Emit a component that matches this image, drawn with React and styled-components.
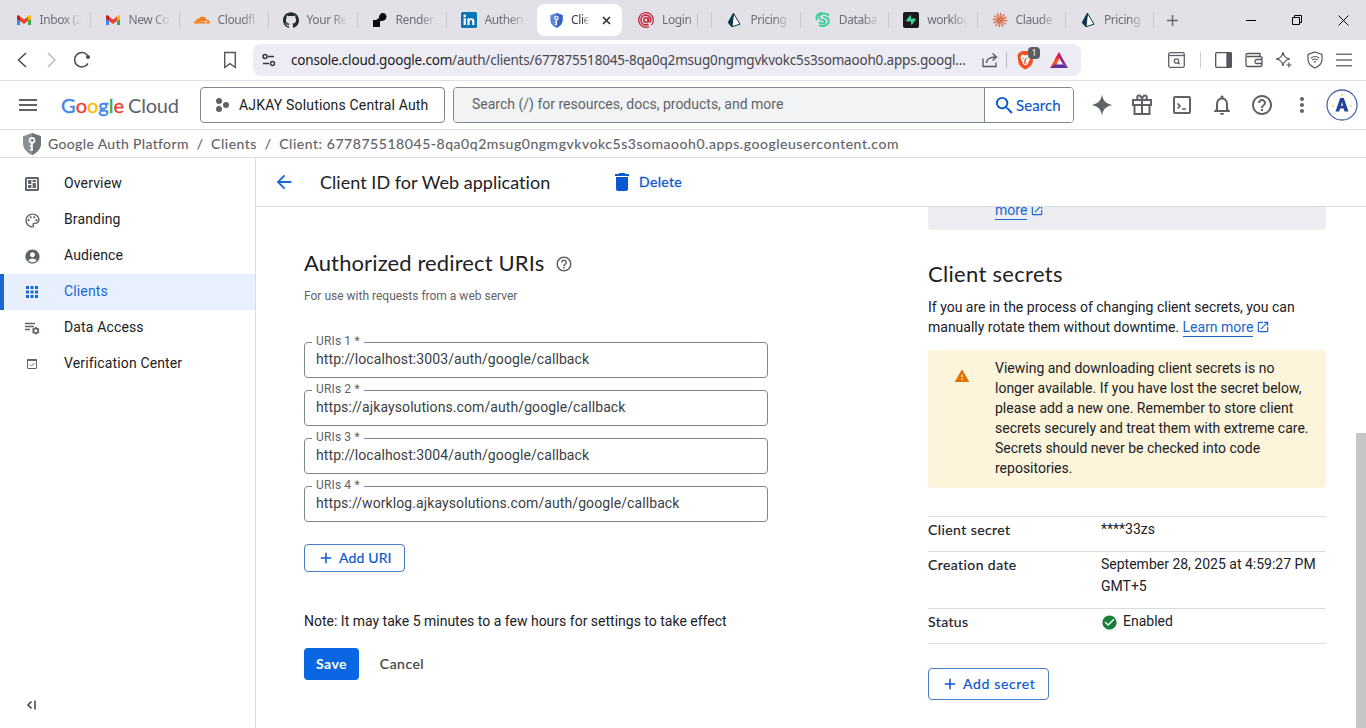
import React from 'react';
import styled, { createGlobalStyle } from 'styled-components';
import {
  MdOutlinePalette, MdAccountCircle, MdApps, MdDelete, MdArrowBack, MdHelpOutline,
  MdOpenInNew, MdWarning, MdCheckCircle, MdAdd, MdMoreVert, MdNotificationsNone,
  MdSearch, MdMenu,
} from 'react-icons/md';
import { SiCloudflare, SiGithub, SiSupabase } from 'react-icons/si';

const product = '"Lato", "Open Sans", sans-serif';
const chrome = '"Noto Sans", "Open Sans", sans-serif';

const GlobalStyle = createGlobalStyle`
  * { box-sizing: border-box; }
  body { margin: 0; background: #fff; color: #202124; font: 14px/20px Roboto, "Liberation Sans", sans-serif; overflow: hidden; }
  svg { display: block; flex: none; }
  button { font: inherit; margin: 0; cursor: pointer; }
`;

const Window = styled.div`
  display: flex;
  flex-direction: column;
  width: 1366px;
  height: 728px;
  overflow: hidden;
`;

/* ---------- browser tabs ---------- */
const TabStrip = styled.div`
  display: flex;
  flex: none;
  height: 40px;
  padding-left: 1.5px;
  background: #e2e1e8;
  font-family: ${chrome};
`;
const Tab = styled.div`
  display: flex;
  align-items: center;
  width: ${p => p.$w}px;
  height: 40px;
  padding-left: 14px;
`;
const TabTitle = styled.span`
  width: ${p => p.$w || 41}px;
  margin-left: 8px;
  overflow: hidden;
  white-space: nowrap;
  font-size: 12px;
  letter-spacing: -0.4px;
  line-height: 18px;
  color: ${p => (p.$dark ? '#3b3b42' : '#6e6e77')};
  mask-image: linear-gradient(to right, #000 60%, transparent 100%);
`;
const TabDivider = styled.span`
  width: 1px;
  height: 16px;
  margin-left: auto;
  background: ${p => (p.$hidden ? 'transparent' : '#c9c8d0')};
`;
const ActiveTab = styled.div`
  display: flex;
  align-items: center;
  width: 85px;
  height: 32px;
  margin: 4px 2px 0 1.5px;
  padding-left: 13px;
  border-radius: 8px;
  background: #fff;
`;
const NewTab = styled.div`
  display: flex;
  align-items: center;
  justify-content: center;
  width: 36px;
  height: 40px;
`;
const WindowButtons = styled.div`
  display: flex;
  margin-left: auto;
`;
const WindowButton = styled.div`
  display: flex;
  align-items: center;
  justify-content: center;
  width: 46px;
  height: 40px;
`;

/* ---------- address bar ---------- */
const Toolbar = styled.div`
  display: flex;
  flex: none;
  align-items: center;
  height: 41px;
  padding: 0 14px 0 15px;
  border-bottom: 1px solid #dfdee5;
`;
const NavButtons = styled.div`
  display: flex;
  align-items: center;
  gap: 15px;
  width: 208px;
`;
const AddressField = styled.div`
  display: flex;
  flex: none;
  align-items: center;
  width: 828px;
  height: 32px;
  margin-left: 16px;
  padding: 0 11px 0 8px;
  border-radius: 8px;
  background: #edecf4;
`;
const Address = styled.span`
  flex: none;
  width: 676px;
  margin: 0 15px 0 14px;
  white-space: nowrap;
  font: 13.5px/20px ${chrome};
  letter-spacing: -0.19px;
  color: #46464f;
  b { font-weight: 400; color: #1b1b1f; }
`;
const FieldDivider = styled.span`
  width: 1px;
  height: 16px;
  margin: 0 10px 0 8px;
  background: #b9b8c2;
`;
const Shields = styled.div`
  position: relative;
  width: 23px;
  height: 20px;
  margin-right: 10px;
`;
const ShieldBadge = styled.span`
  position: absolute;
  top: -3px;
  right: 0;
  width: 12px;
  height: 12px;
  border-radius: 4px;
  background: #5b5e66;
  color: #fff;
  font: 8px/12px ${chrome};
  text-align: center;
`;
const Extensions = styled.div`
  display: flex;
  align-items: center;
  margin-left: auto;
`;
const ExtDivider = styled.span`
  width: 1px;
  height: 16px;
  margin: 0 14px 0 15px;
  background: #d0cfd6;
`;
const ExtGroup = styled.div`
  display: flex;
  align-items: center;
  gap: 12.5px;
`;

/* ---------- console header ---------- */
const ConsoleBar = styled.header`
  display: flex;
  flex: none;
  align-items: center;
  height: 49px;
  padding: 0 8px 0 16px;
  border-bottom: 1px solid #dadce0;
  color: #5f6368;
`;
const Logo = styled.div`
  display: flex;
  flex: none;
  width: 117px;
  margin: -1px 22px 0 21px;
  font: 20px/28px ${product};
`;
const LogoLetter = styled.span`
  color: ${p => p.$c};
  -webkit-text-stroke: 0.4px ${p => p.$c};
`;
const LogoWord = styled.span`
  margin-left: 4px;
  color: #5f6368;
  letter-spacing: -0.2px;
`;
const ProjectPicker = styled.button`
  display: flex;
  align-items: center;
  width: 245px;
  height: 36px;
  padding: 0 0 1px 14px;
  border: 1px solid #80868b;
  border-radius: 4px;
  background: #fff;
  color: #202124;
  letter-spacing: 0.17px;
  svg { margin-right: 9px; }
`;
const SearchBox = styled.div`
  display: flex;
  width: 621px;
  height: 36px;
  margin-left: 8px;
  border: 1px solid #80868b;
  border-radius: 4px;
  overflow: hidden;
`;
const SearchHint = styled.div`
  flex: 1;
  padding: 6px 18px;
  background: #f1f3f4;
`;
const SearchButton = styled.button`
  display: flex;
  align-items: center;
  width: 89px;
  padding: 0 0 0 8px;
  border: 0;
  border-left: 1px solid #80868b;
  background: #fff;
  color: #0b57d0;
  font: 15px/20px ${product};
  letter-spacing: 0.1px;
  -webkit-text-stroke: 0.15px #0b57d0;
`;
const BarIcons = styled.div`
  display: flex;
  align-items: center;
  gap: 16px;
  margin-left: auto;
`;
const Avatar = styled.div`
  display: flex;
  width: 32px;
  margin-left: -4px;
`;

/* ---------- breadcrumb ---------- */
const Crumbs = styled.nav`
  display: flex;
  flex: none;
  align-items: center;
  height: 28px;
  padding-left: 23px;
  border-bottom: 1px solid #dadce0;
  color: #5f6368;
  font: 14px/20px ${product};
  -webkit-text-stroke: 0.15px #5f6368;
`;
const Crumb = styled.span`
  letter-spacing: ${p => p.$ls || 0}px;
  margin-left: ${p => p.$ml}px;
  white-space: nowrap;
`;

/* ---------- page ---------- */
const Page = styled.div`
  display: flex;
  flex: 1;
  min-height: 0;
`;
const Sidebar = styled.aside`
  display: flex;
  flex-direction: column;
  width: 256px;
  padding-top: 8px;
  border-right: 1px solid #dadce0;
`;
const NavItem = styled.a`
  display: flex;
  align-items: center;
  height: 36px;
  padding-left: ${p => (p.$active ? 20 : 24)}px;
  border-left: ${p => (p.$active ? '4px solid #1967d2' : '0')};
  background: ${p => (p.$active ? '#e8f0fe' : 'transparent')};
  color: ${p => (p.$active ? '#1967d2' : '#202124')};
  letter-spacing: 0.14px;
  svg { color: ${p => (p.$active ? '#1967d2' : '#5f6368')}; }
`;
const NavSlot = styled.span`
  display: flex;
  justify-content: center;
  width: 16px;
`;
const NavLabel = styled.span`
  margin: -2px 0 0 24px;
`;
const Collapse = styled.div`
  margin: auto 0 15px 25px;
`;
const Main = styled.main`
  display: flex;
  flex: 1;
  flex-direction: column;
`;
const TitleBar = styled.div`
  display: flex;
  flex: none;
  align-items: center;
  height: 49px;
  padding-left: 17px;
  border-bottom: 1px solid #dadce0;
  color: #1967d2;
`;
const PageTitle = styled.h1`
  width: 290px;
  margin: -1px 0 0 25px;
  font: 400 18px/24px ${product};
  letter-spacing: 0.04px;
  color: #202124;
`;
const DeleteButton = styled.button`
  display: flex;
  align-items: center;
  gap: 5px;
  padding: 0;
  border: 0;
  background: none;
  color: #0b57d0;
  font: 14px/20px ${product};
  letter-spacing: 0.35px;
  -webkit-text-stroke: 0.3px #0b57d0;
`;
const ScrollArea = styled.div`
  display: flex;
  flex: 1;
  min-height: 0;
  overflow: hidden;
`;
const FormColumn = styled.section`
  width: 464px;
  margin-left: 48px;
  padding-top: 40px;
`;
const HeadingRow = styled.div`
  display: flex;
  align-items: center;
  gap: 11px;
  color: #5f6368;
  svg { margin-top: 2px; }
`;
const Heading = styled.h2`
  margin: 0;
  font: 400 22px/32px ${product};
  letter-spacing: ${p => p.$ls || 0}px;
  color: #202124;
`;
const Hint = styled.p`
  margin: 9px 0 30px;
  font-size: 12px;
  line-height: 16px;
  color: #5f6368;
`;
const Field = styled.fieldset`
  height: 44px;
  margin: 0 0 4px;
  padding: 0 11px;
  border: 1px solid #80868b;
  border-radius: 4px;
  color: #3c4043;
  letter-spacing: 0.09px;
`;
const FieldLabel = styled.legend`
  width: 52px;
  margin-left: -4px;
  padding: 0 4px 2px;
  font-size: 12px;
  line-height: 14px;
  letter-spacing: 0.15px;
  white-space: nowrap;
  color: #5f6368;
`;
const FieldValue = styled.div`
  margin-top: -1px;
`;
const OutlineButton = styled.button`
  display: flex;
  align-items: center;
  width: ${p => p.$w}px;
  height: ${p => p.$h}px;
  margin-top: ${p => p.$mt}px;
  padding: 0 0 0 12px;
  border: 1px solid #4a7ac9;
  border-radius: 4px;
  background: #fff;
  color: #0b57d0;
  font: 14px/20px ${product};
  letter-spacing: ${p => p.$ls || 0}px;
  white-space: nowrap;
  -webkit-text-stroke: 0.2px #0b57d0;
  svg { margin-right: 4px; }
`;
const Note = styled.p`
  margin: 39px 0 17px;
`;
const Actions = styled.div`
  display: flex;
  gap: 10px;
`;
const Action = styled.button`
  width: ${p => p.$w}px;
  height: 32px;
  padding: 0;
  border: 0;
  border-radius: 4px;
  background: ${p => (p.$primary ? '#0b66e4' : 'transparent')};
  color: ${p => (p.$primary ? '#fff' : '#3c4043')};
  font: ${p => (p.$primary ? 700 : 400)} 14px/20px ${product};
  letter-spacing: 0.5px;
  -webkit-text-stroke: ${p => (p.$primary ? 0 : 0.2)}px;
`;
const InfoColumn = styled.section`
  width: 398px;
  margin-left: 160px;
`;
const InfoCard = styled.div`
  height: 30px;
  margin-top: -7px;
  padding-left: 67px;
  border-radius: 4px;
  background: #ecedf1;
`;
const Link = styled.a`
  display: inline-flex;
  align-items: center;
  gap: 3px;
  color: #1967d2;
`;
const LinkText = styled.span`
  height: 20px;
  border-bottom: 1px solid #1967d2;
`;
const SecretsHeading = styled(Heading)`
  margin: 28px 0 7px;
`;
const Body = styled.div`
  white-space: nowrap;
`;
const WarningCard = styled.div`
  display: flex;
  height: 138px;
  margin: 13px 0 28px;
  padding: 8px 0 0 26px;
  border-radius: 4px;
  background: #fcf5dc;
  svg { margin: 10px 25px 0 0; }
`;
const Row = styled.div`
  display: flex;
  height: ${p => p.$h}px;
  border-top: 1px solid #dadce0;
  border-bottom: ${p => (p.$last ? '1px solid #dadce0' : '0')};
`;
const Term = styled.div`
  width: 173px;
  padding-top: 3px;
  font: 14px/20px ${product};
  letter-spacing: 0.42px;
  -webkit-text-stroke: 0.2px #202124;
`;
const Value = styled.div`
  display: flex;
  gap: 5px;
  padding-top: 1px;
  line-height: 22px;
  svg { margin-top: 4px; }
`;
const ScrollThumb = styled.div`
  flex: none;
  width: 10px;
  height: 300px;
  margin: 226px 0 0 auto;
  background: #c6c6c6;
`;

/* ---------- drawings ---------- */
const Line = ({ w = 16, h = 16, vb, sw = 1.3, children, ...rest }) => (
  <svg width={w} height={h} viewBox={vb || `0 0 ${w} ${h}`} fill="none" stroke="currentColor" strokeWidth={sw} {...rest}>{children}</svg>
);
const Gmail = () => (
  <svg width="16" height="16" viewBox="0 0 16 16">
    <path d="M1 4v9h3V6z" fill="#4285f4" /><path d="M15 4v9h-3V6z" fill="#34a853" />
    <path d="M12 4l2-1q1 0 1 1.500v2.500l-3 2z" fill="#fbbc04" />
    <path d="M4 4L2.200 3Q1 3 1 4.500V7l3 2z" fill="#c5221f" />
    <path d="M4 4.500l4 3 4-3V9l-4 3-4-3z" fill="#ea4335" />
  </svg>
);
const RenderMark = () => (
  <svg width="16" height="16" viewBox="0 0 16 16"><path d="M1 8h3.500C5 7 6 6.500 7 6c0-7 8-6 7.500-1C14 8 12 9 8 9v6H1z" fill="#0b0b0b" /></svg>
);
const LinkedIn = () => (
  <svg width="16" height="16" viewBox="0 0 16 16">
    <rect width="16" height="16" rx="1.500" fill="#0a76b3" />
    <circle cx="3.700" cy="3.900" r="1.300" fill="#fff" /><path d="M2.600 6.200h2.200V13H2.600zM6.400 6.200h2v1c1-1.600 5-1.700 5 1.900V13h-2.200V9.600c0-2.300-2.600-2.100-2.600 0V13H6.400z" fill="#fff" />
  </svg>
);
const AuthShield = ({ w, h, a, b }) => (
  <svg width={w} height={h} viewBox="0 0 18 22">
    <path d="M9 0l9 3.200V10c0 5.500-4 10-9 12-5-2-9-6.500-9-12V3.200z" fill={a} />
    <path d="M9 0l9 3.200V10c0 5.500-4 10-9 12z" fill={b} />
    <circle cx="9" cy="7.300" r="2.500" fill="none" stroke="#fff" strokeWidth="1.700" />
    <path d="M9 9.500V18M9 13H6.700M9 16.500H6.700" stroke="#fff" strokeWidth="1.700" />
  </svg>
);
const TargetMark = () => (
  <Line sw="1.600" color="#c3283c"><circle cx="8" cy="8" r="2.200" /><path d="M10.400 5.500v3.300c.3 1.800 2.400 1.200 2.400-1A4.900 4.900 0 1 0 8 12.900q1.500 0 2.500-.6" /><path d="M11 14.600A7.300 7.300 0 1 1 15.300 8c0 2.500-1 4-2 5" strokeWidth="1.300" /></Line>
);
const PrismMark = () => (
  <svg width="16" height="16" viewBox="0 0 16 16"><path d="M7.500 1.300L14 12.200 6 14.700 2.500 10.500z" fill="#fff" stroke="#0c344b" strokeLinejoin="round" /><path d="M7.500 1.300L6 14.700 2.300 10.500z" fill="#0c344b" stroke="#0c344b" strokeLinejoin="round" /></svg>
);
const SwirlMark = () => (
  <Line sw="1.900" color="#38cf9a"><path d="M14 3.500C10-.5 3 2 4.500 6.500c1 2.500 6 .5 5.500 3.500-.5 2-4 2-6 0" /><path d="M13 6.500c3 5-4 9.500-9 6.500M2 8C0 3.500 4 .8 7.500 1M8 5.500c2-1 5 0 5 2.500" /></Line>
);
const Burst = () => (
  <Line sw="1.500" color="#dd7355">
    {Array.from({ length: 12 }, (_, i) => {
      const t = (i * Math.PI) / 6 + 0.1;
      return <path key={i} d={`M8 8L${8 + 7.3 * Math.cos(t)} ${8 + 7.3 * Math.sin(t)}`} />;
    })}
  </Line>
);
const TileMark = styled.span`
  display: flex;
  flex: none;
  align-items: center;
  justify-content: center;
  width: 16px;
  height: 16px;
  border-radius: 2px;
  background: #1a1a1d;
`;
const SupabaseMark = () => (
  <TileMark><SiSupabase size={10} color="#3ecf8e" /></TileMark>
);

const before = [
  [<Gmail />, 'Inbox (2'], [<Gmail />, 'New Co'], [<SiCloudflare size={16} color="#f48120" />, 'Cloudfl'],
  [<SiGithub size={16} color="#24292f" />, 'Your Re'], [<RenderMark />, 'Render'], [<LinkedIn />, 'Authen', true],
];
const after = [
  [<TargetMark />, 'Login |'], [<PrismMark />, 'Pricing'], [<SwirlMark />, 'Databa'],
  [<SupabaseMark />, 'worklog'], [<Burst />, 'Claude'], [<PrismMark />, 'Pricing'],
];
const renderTabs = (tabs, w) => tabs.map(([icon, label, last], i) => (
  <Tab key={i} $w={w}>{icon}<TabTitle>{label}</TabTitle><TabDivider $hidden={last} /></Tab>
));

const DashboardIcon = () => (
  <svg width="16" height="16" viewBox="0 0 16 16"><rect x="1" y="1" width="14" height="14" rx="1.500" fill="currentColor" />
    <path d="M3.500 3.500h9v9h-9zM8 3.500v9M3.500 8.500H8M8 6.500h4.500" fill="none" stroke="#fff" strokeWidth="1.200" /></svg>
);
const DataIcon = () => (
  <Line sw="1.500"><path d="M1 3.500h10M1 6.500h9M1 9.500h5" /><circle cx="11.800" cy="10.800" r="2.400" strokeWidth="1.700" /><path d="M11.800 7v1M11.800 13.600v1M8.500 8.900l1 .6M14.100 12.100l1 .6M8.500 12.700l1-.6M14.100 9.500l1-.6" /></Line>
);
const VerifyIcon = () => (
  <Line sw="1"><rect x="3.500" y="3.500" width="9" height="9" rx=".5" /><path d="M3 4.200h10" strokeWidth="1.500" /><path d="M6 8.500l1.500 1.500 3-3" /></Line>
);
const navItems = [
  ['Overview', <DashboardIcon />], ['Branding', <MdOutlinePalette size={17} />], ['Audience', <MdAccountCircle size={17} />],
  ['Clients', <MdApps size={18} />], ['Data Access', <DataIcon />], ['Verification Center', <VerifyIcon />],
];
const uris = [
  'http://localhost:3003/auth/google/callback',
  'https://ajkaysolutions.com/auth/google/callback',
  'http://localhost:3004/auth/google/callback',
  'https://worklog.ajkaysolutions.com/auth/google/callback',
];
const logo = [['G', '#4285f4'], ['o', '#ea4335'], ['o', '#fbbc04'], ['g', '#4285f4'], ['l', '#34a853'], ['e', '#ea4335']];

export default function App() {
  return (
    <Window>
      <GlobalStyle />
      <TabStrip>
        {renderTabs(before, 89)}
        <ActiveTab>
          <AuthShield w={13} h={15} a="#5c85e0" b="#3a62c8" />
          <TabTitle $dark $w={19}>Clien</TabTitle>
          <Line w={25} h={9} sw="1.700" color="#35353b"><path d="M13 1l7 7M20 1l-7 7" /></Line>
        </ActiveTab>
        {renderTabs(after, 88.4)}
        <NewTab><Line w={11} h={11} color="#6a6a72" sw="1.500"><path d="M5.500 0v11M0 5.500h11" /></Line></NewTab>
        <WindowButtons>
          <WindowButton><Line w={10} h={1} sw="2" color="#000"><path d="M0 .5h10" /></Line></WindowButton>
          <WindowButton><Line w={10} h={10} sw="1" color="#000"><path d="M.5 2.500h7v7h-7zM2.500 2.500v-2h7v7h-2" /></Line></WindowButton>
          <WindowButton><Line w={11} h={11} sw="1" color="#000"><path d="M.5.500l10 10M10.500.500l-10 10" /></Line></WindowButton>
        </WindowButtons>
      </TabStrip>

      <Toolbar>
        <NavButtons>
          <Line w={14} h={16} sw="1.500" color="#4a4a52"><path d="M11 1L3.500 8l7.500 7" /></Line>
          <Line w={14} h={16} sw="1.300" color="#b5b5bb"><path d="M4 1l7 7-7 7" /></Line>
          <Line w={18} h={18} sw="1.500" color="#4a4a52"><path d="M15 12.500A7.200 7.200 0 1 1 14.600 4.500" /><circle cx="15" cy="6" r="2" fill="currentColor" stroke="none" /></Line>
        </NavButtons>
        <Line w={14} h={18} sw="1.400" color="#55555d"><path d="M1.700 1.500h10.600v15L7 12.700l-5.300 3.800z" /></Line>
        <AddressField>
          <Line w={16} h={16} sw="1.500" color="#36363c"><circle cx="4" cy="4.500" r="2" /><path d="M7 4.500h6M2 11.500h6" /><circle cx="11.500" cy="11.500" r="2" /></Line>
          <Address><b>console.cloud.google.com</b>/auth/clients/677875518045-8qa0q2msug0ngmgvkvokc5s3somaooh0.apps.googl...</Address>
          <Line w={16} h={16} sw="1.300" color="#55555d"><path d="M1 6.500v8h13v-4M4.500 11C4.500 7 7 5 14 5M10.500 1.500L14.500 5l-4 3.500" /></Line>
          <FieldDivider />
          <Shields>
            <svg width="17" height="20" viewBox="0 0 17 20"><path d="M4.500 1h7l2 1.500h1.500l1.500 3-1 7.500c-1 3-4 5-7.200 6.500C5 18 2.500 16 1.500 13L.5 5.500 2 2.500h1.500z" fill="#f4511e" /><path d="M5 4.500l3.300 1 3.300-1 2 3-1.600 4-1 .5.500 1.500-3 2-3-2 .5-1.500-1-.5-1.600-4z" fill="#fff" /><path d="M5.500 8l1.800.6M11.200 8l-1.900.6M8.300 8.500v3l-1 .8M7 13.200h2.600" stroke="#f4511e" /></svg>
            <ShieldBadge>1</ShieldBadge>
          </Shields>
          <svg width="18" height="16" viewBox="0 0 18 16"><path d="M9 0L0 16h5l4-9z" fill="#f4511e" /><path d="M9 0l9 16-4.500-3L9 6z" fill="#8f2c8c" /><path d="M0 16l5-3.500h8L18 16z" fill="#5d2f9a" /><path d="M9 0L4.500 8 9 6z" fill="#e8293c" /></svg>
        </AddressField>
        <Extensions>
          <Line w={17} h={16} sw="1.300" color="#606068"><rect x=".7" y=".7" width="15.600" height="14.600" rx="1.500" /><path d="M1 3.500h15" /><circle cx="8.500" cy="9" r="2.200" /><path d="M10.200 10.700l1.600 1.600" /></Line>
          <ExtDivider />
          <ExtGroup>
            <Line w={17} h={16} sw="1.300" color="#55555d"><rect x=".7" y=".7" width="15.600" height="14.600" rx="1" /><path d="M12 1h4v14h-4z" fill="currentColor" /></Line>
            <Line w={18} h={16} sw="1.300" color="#55555d"><path d="M15 4.500V1.500H3Q1 1.500 1 3.500v9Q1 14.500 3 14.500h12q2 0 2-2v-6q0-2-2-2H2" /><path d="M17 7.500h-5.500q-1.500 0-1.500 2t1.500 2H17" /></Line>
            <Line w={18} h={18} sw="1.200" color="#55555d"><path d="M8 1q.7 6 7 7-6.300 1-7 7Q7.500 9 1 8q6.500-1 7-7zM14 11.500v5M11.500 14h5" /></Line>
            <Line w={18} h={18} sw="1.200" color="#55555d"><path d="M9 1l7 2.500v5c0 4-3 6.700-7 8.500-4-1.800-7-4.500-7-8.500v-5zM5 7q4-3 8 0M6.300 9q2.700-2 5.400 0M8 11q1-.8 2 0" /></Line>
            <Line w={16} h={14} sw="1.500" color="#74747b"><path d="M0 1.200h16M0 7h16M0 12.800h16" /></Line>
          </ExtGroup>
        </Extensions>
      </Toolbar>

      <ConsoleBar>
        <MdMenu size={24} />
        <Logo>{logo.map(([l, c], i) => <LogoLetter key={i} $c={c}>{l}</LogoLetter>)}<LogoWord>Cloud</LogoWord></Logo>
        <ProjectPicker>
          <svg width="15" height="16" viewBox="0 0 15 16" fill="#5f6368"><circle cx="4" cy="4" r="3" /><circle cx="4" cy="12" r="3" /><circle cx="11" cy="8" r="3" /></svg>
          AJKAY Solutions Central Auth
        </ProjectPicker>
        <SearchBox>
          <SearchHint>Search (/) for resources, docs, products, and more</SearchHint>
          <SearchButton><MdSearch size={23} />Search</SearchButton>
        </SearchBox>
        <BarIcons>
          <svg width="24" height="24" viewBox="0 0 24 24" fill="currentColor"><path d="M12 1.500c1 6 3.500 9 10 10.500-6.500 1.500-9 4.500-10 10.500C11 16.500 8.500 13.500 2 12c6.500-1.500 9-4.500 10-10.500z" /></svg>
          <Line w={24} h={24} sw="2"><path d="M3 7h18v5H3zM4.500 12v9h15v-9M12 7v14M12 6.500C11 0 5 2.500 8 6.500M12 6.500C13 0 19 2.500 16 6.500" /></Line>
          <Line w={24} h={24} sw="2"><rect x="4" y="4" width="16" height="16" rx="1" /><path d="M7.500 10.500l2.500 2.500-2.500 2.500M12 16h4" strokeWidth="1.700" /></Line>
          <MdNotificationsNone size={24} />
          <MdHelpOutline size={24} />
          <MdMoreVert size={24} />
          <Avatar>
            <svg width="32" height="32" viewBox="0 0 32 32"><circle cx="16" cy="16" r="15" fill="#fff" stroke="#4b66a8" strokeWidth="1.300" /><path d="M9.500 22.500L14.200 9h3.600l4.700 13.500h-4l-.9-3h-3.500l-.9 3zM15 16.700h2L16 13z" fill="#24439a" /><g fill="#e8c765"><circle cx="16" cy="6" r=".9" /><circle cx="7" cy="17" r=".9" /><circle cx="25" cy="17" r=".9" /></g></svg>
          </Avatar>
        </BarIcons>
      </ConsoleBar>

      <Crumbs>
        <AuthShield w={18} h={22} a="#8b8f94" b="#70757a" />
        <Crumb $ml={7} $ls={0.37}>Google Auth Platform</Crumb>
        <Crumb $ml={8}>/</Crumb>
        <Crumb $ml={8} $ls={0.5}>Clients</Crumb>
        <Crumb $ml={8}>/</Crumb>
        <Crumb $ml={8} $ls={0.55}>Client: 677875518045-8qa0q2msug0ngmgvkvokc5s3somaooh0.apps.googleusercontent.com</Crumb>
      </Crumbs>

      <Page>
        <Sidebar>
          {navItems.map(([label, icon]) => (
            <NavItem key={label} $active={label === 'Clients'}><NavSlot>{icon}</NavSlot><NavLabel>{label}</NavLabel></NavItem>
          ))}
          <Collapse><Line w={12} h={16} sw="1.500" color="#3c4043"><path d="M10 3.500v9M6.500 4.500L3 8l3.500 3.500" /></Line></Collapse>
        </Sidebar>
        <Main>
          <TitleBar>
            <MdArrowBack size={22} />
            <PageTitle>Client ID for Web application</PageTitle>
            <DeleteButton><MdDelete size={24} />Delete</DeleteButton>
          </TitleBar>
          <ScrollArea>
            <FormColumn>
              <HeadingRow><Heading $ls={0.12}>Authorized redirect URIs</Heading><MdHelpOutline size={18} /></HeadingRow>
              <Hint>For use with requests from a web server</Hint>
              {uris.map((u, i) => (
                <Field key={u}><FieldLabel>URIs {i + 1} *</FieldLabel><FieldValue>{u}</FieldValue></Field>
              ))}
              <OutlineButton $w={101} $h={28} $mt={22} $ls={0.15}><MdAdd size={18} />Add URI</OutlineButton>
              <Note>Note: It may take 5 minutes to a few hours for settings to take effect</Note>
              <Actions><Action $primary $w={55}>Save</Action><Action $w={66}>Cancel</Action></Actions>
            </FormColumn>
            <InfoColumn>
              <InfoCard><Link><LinkText>more</LinkText><MdOpenInNew size={14} /></Link></InfoCard>
              <SecretsHeading $ls={0.3}>Client secrets</SecretsHeading>
              <Body>If you are in the process of changing client secrets, you can<br />manually rotate them without downtime. <Link><LinkText>Learn more</LinkText><MdOpenInNew size={14} /></Link></Body>
              <WarningCard>
                <MdWarning size={16} color="#e37400" />
                <Body>Viewing and downloading client secrets is no<br />longer available. If you have lost the secret below,<br />please add a new one. Remember to store client<br />secrets securely and treat them with extreme care.<br />Secrets should never be checked into code<br />repositories.</Body>
              </WarningCard>
              <Row $h={35}><Term>Client secret</Term><Value>****33zs</Value></Row>
              <Row $h={57}><Term>Creation date</Term><Value>September 28, 2025 at 4:59:27 PM<br />GMT+5</Value></Row>
              <Row $h={36} $last><Term>Status</Term><Value><MdCheckCircle size={17} color="#188038" />Enabled</Value></Row>
              <OutlineButton $w={121} $h={32} $mt={24} $ls={0.65}><MdAdd size={18} />Add secret</OutlineButton>
            </InfoColumn>
            <ScrollThumb />
          </ScrollArea>
        </Main>
      </Page>
    </Window>
  );
}
